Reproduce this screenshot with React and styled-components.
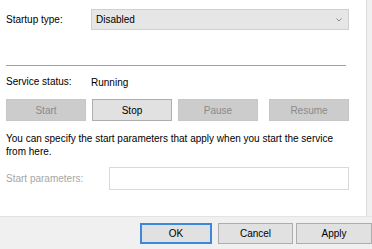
import React from "react";
import styled, { createGlobalStyle } from "styled-components";

const Global = createGlobalStyle`
  html, body { margin: 0; padding: 0; background: #ffffff; }
  body { font-family: "Liberation Sans", Arial, sans-serif; font-size: 10px; color: #000; }
  * { box-sizing: border-box; }
`;

const Window = styled.div`
  width: 372px;
  height: 249px;
  display: grid;
  grid-template-columns: 367px 5px;
  grid-template-rows: 216px 33px;
  overflow: hidden;
  background: #f0f0f0;
`;

const Page = styled.div`
  background: #ffffff;
  border-right: 1px solid #dcdcdc;
  padding-left: 6px;
  display: flex;
  flex-direction: column;
`;

const Strip = styled.div`
  background: #f0f0f0;
`;

const Row = styled.div`
  display: flex;
  align-items: center;
  height: ${(p) => p.$h}px;
  margin-top: ${(p) => p.$mt}px;
`;

const Label = styled.span`
  width: ${(p) => p.$w}px;
  flex: none;
  line-height: 14px;
  color: ${(p) => (p.$disabled ? "#a6a6a6" : "#000")};
`;

const Combo = styled.div`
  width: 258px;
  height: 21px;
  background: #e6e6e6;
  border: 1px solid #cfcfcf;
  display: flex;
  align-items: center;
  justify-content: space-between;
  padding: 0 6px 0 4px;
`;

const Separator = styled.div`
  width: 340px;
  height: 1px;
  background: #a0a0a0;
  margin-top: 35px;
`;

const ButtonRow = styled.div`
  display: flex;
  margin-top: 10px;
  height: 22px;
`;

const Button = styled.div`
  width: ${(p) => p.$w}px;
  height: 100%;
  margin-left: ${(p) => p.$ml || 0}px;
  display: flex;
  align-items: center;
  justify-content: center;
  background: ${(p) => (p.$disabled ? "#cccccc" : "#e1e1e1")};
  border: ${(p) =>
    p.$default ? "2px solid #3b8ad9" : p.$disabled ? "1px solid #c6c6c6" : "1px solid #adadad"};
  color: ${(p) => (p.$disabled ? "#8a8a8a" : "#000")};
  font-size: 10px;
`;

const Paragraph = styled.p`
  margin: 11px 0 0 0;
  width: 345px;
  line-height: 13px;
`;

const TextBox = styled.div`
  width: 240px;
  height: 23px;
  background: #ffffff;
  border: 1px solid #d9d9d9;
`;

const Footer = styled.div`
  grid-column: 1 / span 2;
  background: #f0f0f0;
  border-top: 1px solid #e3e3e3;
  display: flex;
  padding-top: 6px;
  padding-left: 140px;
`;

const FooterButtons = styled.div`
  display: flex;
  height: 21px;
`;

const Chevron = () => (
  <svg width="6" height="4" viewBox="0 0 6 4">
    <path d="M0.5 0.5 L3 3 L5.5 0.5" fill="none" stroke="#8a8a8a" strokeWidth="1" />
  </svg>
);

export default function App() {
  return (
    <>
      <Global />
      <Window>
        <Page>
          <Row $h={21} $mt={9}>
            <Label $w={85}>Startup type:</Label>
            <Combo>
              <span>Disabled</span>
              <Chevron />
            </Combo>
          </Row>
          <Separator />
          <Row $h={14} $mt={9}>
            <Label $w={85}>Service status:</Label>
            <span>Running</span>
          </Row>
          <ButtonRow>
            <Button $w={80} $disabled>Start</Button>
            <Button $w={80} $ml={6}>Stop</Button>
            <Button $w={80} $ml={6} $disabled>Pause</Button>
            <Button $w={80} $ml={11} $disabled>Resume</Button>
          </ButtonRow>
          <Paragraph>
            You can specify the start parameters that apply when you start the service from here.
          </Paragraph>
          <Row $h={23} $mt={9}>
            <Label $w={103} $disabled>Start parameters:</Label>
            <TextBox />
          </Row>
        </Page>
        <Strip />
        <Footer>
          <FooterButtons>
            <Button $w={72} $default>OK</Button>
            <Button $w={75} $ml={6}>Cancel</Button>
            <Button $w={76} $ml={3}>Apply</Button>
          </FooterButtons>
        </Footer>
      </Window>
    </>
  );
}
